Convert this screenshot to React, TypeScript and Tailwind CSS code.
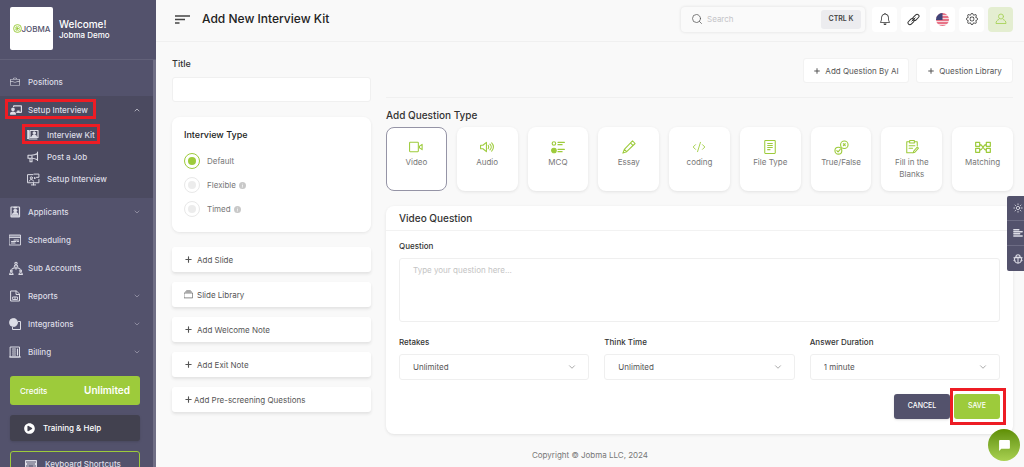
import React from 'react';
import { ChevronDown, ChevronUp, CodeXml, Plus, Search, Sun } from 'lucide-react';
import { FaChalkboardTeacher, FaKeyboard, FaPlayCircle } from 'react-icons/fa';
import { BsBell, BsBriefcase, BsGear, BsInfoCircleFill } from 'react-icons/bs';
import { MdChatBubble } from 'react-icons/md';

type IconProps = { className?: string; children?: React.ReactNode };

const Svg = ({ className = 'size-3', children }: IconProps) => (
  <svg
    xmlns="http://www.w3.org/2000/svg"
    viewBox="0 0 24 24"
    fill="none"
    stroke="currentColor"
    strokeWidth="1.8"
    strokeLinecap="round"
    strokeLinejoin="round"
    className={className}
    aria-hidden="true"
  >
    {children}
  </svg>
);

/* Sidebar icons */
const KitIcon = () => (
  <Svg>
    <path d="M1 3h3v16H1z" fill="currentColor" />
    <path d="M6 3h16v14H6z" strokeWidth="2.4" />
    <circle cx="14.5" cy="8" r="2.5" fill="currentColor" />
    <path d="M9.5 16c0-6 10-6 10 0z" fill="currentColor" />
    <path d="M4 20h16" strokeWidth="2" />
  </Svg>
);

const MegaphoneIcon = () => (
  <Svg>
    <path d="M21 2v17M21 5c-4 2.5-8 3.5-13 3.5H2v6h6c5 0 9 1 13 3M6 14.5v7h4v-6M10 8.5v6" strokeWidth="2.2" />
  </Svg>
);

const ScreenIcon = () => (
  <Svg className="size-[13px]">
    <path d="M11 3H1v15h21v-6M8 22h8M12 18v4M4 15c1-4 7-4 8 0" />
    <circle cx="8" cy="9" r="2" />
    <path d="M13 2h9v6h-5l-3 3V8" />
  </Svg>
);

const BadgeIcon = () => (
  <Svg>
    <rect x="4" y="2" width="17" height="20" rx="1" strokeWidth="2.4" />
    <circle cx="12.5" cy="9" r="3" fill="currentColor" />
    <path d="M7 17c0-6 11-6 11 0z" fill="currentColor" />
    <path d="M10 3h5M5 20h15" strokeWidth="3" />
  </Svg>
);

const ScheduleIcon = () => (
  <Svg>
    <path d="M1 2h22v20H1zM1 4h22M1 7h22" />
    <path d="M10 12h9M5 15h9M17 15h2M5 18h7" strokeWidth="2.2" />
  </Svg>
);

const AccountsIcon = () => (
  <Svg className="size-[14px]">
    <circle cx="12" cy="4" r="2" />
    <path d="M9 10c0-4 6-4 6 0M12 10v4M5 14l3-2h8l3 2" />
    <circle cx="4" cy="17" r="1.5" />
    <circle cx="20" cy="17" r="1.5" />
    <path d="M1 23c0-4 6-4 6 0zM17 23c0-4 6-4 6 0z" />
  </Svg>
);

const ReportIcon = () => (
  <Svg>
    <path d="M4 2h11l6 6v14H4zM14 2v7h7" strokeWidth="2" />
    <path d="M8 14h9v5H8zM12 14v5" />
  </Svg>
);

const IntegrationIcon = () => (
  <Svg>
    <circle cx="9" cy="9" r="8" fill="currentColor" />
    <path d="M19 7h4v16H7v-4" strokeWidth="2" />
  </Svg>
);

const BillingIcon = () => (
  <Svg>
    <path d="M3 2h18v20H3zM1 22h22" strokeWidth="2" />
    <path d="M7 6h6M7 10h6M7 14h6M7 18h6M17 6v12" strokeWidth="2.4" />
  </Svg>
);

/* Question type icons */
const VideoIcon = () => (
  <Svg className="size-[14px]">
    <rect x="1" y="4" width="15" height="16" rx="1" />
    <path d="M18 10.5l4.5-3v9l-4.500-3z" />
  </Svg>
);

const AudioIcon = () => (
  <Svg className="size-[14px]">
    <path d="M1 9h4l6-5v16l-6-5H1zM14 9c1.5 2 1.5 4 0 6M17 7c3 3 3 7 0 10M20 5c4 4 4 10 0 14" />
  </Svg>
);

const McqIcon = () => (
  <Svg className="size-[14px]">
    <circle cx="5" cy="6" r="3" strokeWidth="2" />
    <circle cx="5" cy="18" r="4" fill="currentColor" />
    <path d="M12 4h11M12 8h7M12 16h11M12 20h7" strokeWidth="2" />
  </Svg>
);

const EssayIcon = () => (
  <Svg className="size-[14px]">
    <path d="M18 1.5l4.5 4.5L8 20l-6.5 2.5L4 16zM14.5 5l4.5 4.5M4 16l4 4" />
  </Svg>
);

const FileIcon = () => (
  <Svg className="size-[14px]">
    <rect x="3" y="1" width="18" height="22" rx="1" />
    <path d="M8 6h8M8 9.500h8M8 13h8M8 16.500h4" />
  </Svg>
);

const TrueFalseIcon = () => (
  <Svg className="size-[15px]">
    <circle cx="16.5" cy="7.5" r="6" />
    <circle cx="7" cy="17" r="5.500" />
    <path d="M15 6l3 3M18 6l-3 3M4.500 17l2 2 3.500-4" />
  </Svg>
);

const BlanksIcon = () => (
  <Svg className="size-[14px]">
    <path d="M8 3H3v19h10M16 3h5v7M8 1h8v4H8zM7 10h10M7 14h6" />
    <path d="M21 12l2 2-6 7-3 1 1-3z" />
  </Svg>
);

const MatchingIcon = () => (
  <Svg className="size-4">
    <path d="M1 5h6v6H1zM1 14h6v6H1zM17 5h6v6h-6zM17 14h6v6h-6zM7 8c5 0 5 9 10 9M7 17c5 0 5-9 10-9" />
  </Svg>
);

/* Header icons */
const LinkIcon = () => (
  <Svg className="size-[13px]">
    <rect x="10" y="4.5" width="13" height="7" rx="3.5" transform="rotate(-45 16.5 8)" />
    <rect x="1" y="12.5" width="13" height="7" rx="3.5" transform="rotate(-45 7.5 16)" />
    <path d="M9 15l6-6" />
  </Svg>
);

const FlagIcon = () => (
  <svg viewBox="0 0 26 26" className="size-[13px] rounded-full" aria-hidden="true">
    <rect width="26" height="26" fill="#f4d9de" />
    <path d="M0 2h26M0 8h26M0 14h26M0 20h26M0 26h26" stroke="#e4506a" strokeWidth="3" />
    <rect width="13" height="14" fill="#3f4478" />
  </svg>
);

const ProfileIcon = () => (
  <Svg className="size-3">
    <circle cx="12" cy="7" r="5" />
    <path d="M7.5 13C4 14 2 17 2 21h20c0-4-2-7-5.5-8" />
  </Svg>
);

const SlideIcon = () => (
  <Svg className="size-[9px]">
    <path d="M1 8h22v13H1zM4 5h16M7 2h10" />
  </Svg>
);

const subItems = [
  { label: 'Interview Kit', icon: <KitIcon />, marked: true },
  { label: 'Post a Job', icon: <MegaphoneIcon /> },
  { label: 'Setup Interview', icon: <ScreenIcon /> },
];

const navItems = [
  { label: 'Applicants', icon: <BadgeIcon />, more: true },
  { label: 'Scheduling', icon: <ScheduleIcon /> },
  { label: 'Sub Accounts', icon: <AccountsIcon /> },
  { label: 'Reports', icon: <ReportIcon />, more: true },
  { label: 'Integrations', icon: <IntegrationIcon />, more: true },
  { label: 'Billing', icon: <BillingIcon />, more: true },
];

const questionTypes = [
  { label: 'Video', icon: <VideoIcon /> },
  { label: 'Audio', icon: <AudioIcon /> },
  { label: 'MCQ', icon: <McqIcon /> },
  { label: 'Essay', icon: <EssayIcon /> },
  { label: 'coding', icon: <CodeXml className="size-[14px]" strokeWidth={1.5} /> },
  { label: 'File Type', icon: <FileIcon /> },
  { label: 'True/False', icon: <TrueFalseIcon /> },
  { label: 'Fill in the Blanks', icon: <BlanksIcon /> },
  { label: 'Matching', icon: <MatchingIcon /> },
];

const plus = <Plus className="size-[9px]" strokeWidth={3} />;

const slideActions = [
  { label: 'Add Slide', icon: plus },
  { label: 'Slide Library', icon: <SlideIcon /> },
  { label: 'Add Welcome Note', icon: plus },
  { label: 'Add Exit Note', icon: plus },
  { label: 'Add Pre-screening Questions', icon: plus, tight: true },
];

const selects = [
  { id: 'retakes', label: 'Retakes', value: 'Unlimited' },
  { id: 'think-time', label: 'Think Time', value: 'Unlimited' },
  { id: 'duration', label: 'Answer Duration', value: '1 minute' },
];

const Sidebar = () => (
  <aside className="sticky top-0 flex h-screen w-[156px] shrink-0 flex-col overflow-hidden bg-[#53526c] text-[#dddde6]">
    <div className="flex h-[60px] shrink-0 items-center gap-1.5 border-b border-[#626179] pb-0.5 pl-2.5">
      <div className="flex size-[43px] items-center justify-center rounded-xs bg-white text-[8px] font-medium text-[#53526c]">
        <svg viewBox="0 0 24 24" className="size-[9px] text-[#9acb3b]" fill="none" stroke="currentColor" strokeWidth="2.5">
          <circle cx="12" cy="12" r="10.5" />
          <circle cx="12" cy="12" r="6" strokeWidth="1.5" />
          <path d="M10 9l5 3-5 3z" fill="currentColor" />
        </svg>
        JOBMA
      </div>
      <div className="font-medium text-white">
        <p className="text-[10px] leading-3">Welcome!</p>
        <p className="text-[8px] leading-[10px]">Jobma Demo</p>
      </div>
    </div>

    <div className="min-h-0 flex-1 border-r-3 border-[#706f86]">
      <nav className="pt-2 text-[8px] font-medium">
        <a href="#positions" className="flex h-7 items-center pl-2">
          <span className="flex w-5 items-center pl-0.5"><BsBriefcase className="size-2.5" /></span>
          Positions
        </a>
        <div className="bg-[#4b4a60] pb-2">
          <a href="#setup" className="relative flex h-7 items-center pr-3 pl-2">
            <span className="flex w-5 items-center pl-0.5"><FaChalkboardTeacher className="size-3" /></span>
            <span className="flex-1">Setup Interview</span>
            <ChevronUp className="size-2" strokeWidth={2} />
            <span className="absolute top-[3px] left-[5px] h-5 w-[91px] border-3 border-[#ed1c24]" />
          </a>
          {subItems.map((item) => (
            <a key={item.label} href="#kit" className="relative flex h-[22px] items-center pl-[27px]">
              <span className="w-5">{item.icon}</span>
              {item.label}
              {item.marked && <span className="absolute top-0 left-[22px] h-5 w-[78px] border-3 border-[#ed1c24]" />}
            </a>
          ))}
        </div>
        {navItems.map((item) => (
          <a key={item.label} href="#section" className="flex h-7 items-center pr-3 pl-2">
            <span className="w-5 pl-px">{item.icon}</span>
            <span className="flex-1">{item.label}</span>
            {item.more && <ChevronDown className="size-2 text-[#a9a8b8]" strokeWidth={2} />}
          </a>
        ))}
      </nav>

      <div className="mt-2.5 mr-[13px] ml-2.5 space-y-2.5 font-medium">
        <div className="flex h-[29px] items-center justify-between rounded-[3px] bg-[#9dcb3b] px-2.5 text-white">
          <span className="text-[8px]">Credits</span>
          <span className="text-[10px] font-semibold">Unlimited</span>
        </div>
        <button type="button" className="flex h-[26px] w-full items-center gap-2 rounded-[3px] bg-[#42414f] px-3.5 text-[8px] text-white shadow-sm">
          <FaPlayCircle className="size-[11px]" />
          Training &amp; Help
        </button>
        <button type="button" className="flex h-[26px] w-full items-center gap-2 rounded-[3px] border border-[#9dcb3b] px-3.5 text-[8px]">
          <FaKeyboard className="size-3" />
          Keyboard Shortcuts
        </button>
      </div>
    </div>
  </aside>
);

const Header = () => (
  <header className="flex h-[42px] items-center border-b border-[#f0f0f0] pr-[11px] pb-[3px] pl-[19px]">
    <button type="button" aria-label="Toggle menu" className="mr-3">
      <svg viewBox="0 0 15 9" className="h-[9px] w-[15px]" stroke="#444" strokeWidth="1.4" aria-hidden="true">
        <path d="M0 1h15M0 4.5h10M0 8h4.5" />
      </svg>
    </button>
    <h1 className="flex-1 text-[12px] font-medium text-[#222]">Add New Interview Kit</h1>
    <div className="flex h-[25px] w-[184px] items-center rounded-sm bg-[#fafafa] pr-1 pl-2.5 shadow-[0_0_3px_#dcdcdc]">
      <Search className="size-3 text-[#555]" strokeWidth={1.5} />
      <input
        type="text"
        aria-label="Search"
        placeholder="Search"
        className="min-w-0 flex-1 pl-1 text-[8px] outline-none placeholder:text-[#c4c4c8]"
      />
      <kbd className="flex h-[19px] w-10 items-center justify-center rounded-[3px] bg-[#ececef] font-[Inter,sans-serif] text-[7px] font-semibold text-[#444]">
        CTRL K
      </kbd>
    </div>
    <div className="ml-[7px] flex gap-1 text-[#333]">
      <button type="button" aria-label="Notifications" className="grid size-[25px] place-items-center rounded-sm bg-white">
        <BsBell className="size-3" />
      </button>
      <button type="button" aria-label="Copy link" className="grid size-[25px] place-items-center rounded-sm bg-white">
        <LinkIcon />
      </button>
      <button type="button" aria-label="Language" className="grid size-[25px] place-items-center rounded-sm bg-white">
        <FlagIcon />
      </button>
      <button type="button" aria-label="Settings" className="grid size-[25px] place-items-center rounded-sm bg-white">
        <BsGear className="size-3" />
      </button>
      <button type="button" aria-label="Profile" className="grid size-[25px] place-items-center rounded-sm bg-[#e4eed1] text-[#a8d35a]">
        <ProfileIcon />
      </button>
    </div>
  </header>
);

const LeftColumn = () => (
  <div className="w-[199px] shrink-0">
    <label htmlFor="title" className="block text-[9px] leading-3 font-medium text-[#333]">Title</label>
    <input
      id="title"
      type="text"
      className="mt-[7px] block h-[25px] w-full rounded-[3px] border border-[#f0f0f0] bg-white px-3 text-[8px] outline-none"
    />

    <fieldset className="mt-[15px] h-[115px] rounded-lg bg-white px-3 pt-3 shadow-[0_1px_3px_#e4e4e4]">
      <p className="text-[9px] leading-3 font-medium text-[#222]">Interview Type</p>
      <div className="mt-2 text-[8px] text-[#777]">
        {['Default', 'Flexible', 'Timed'].map((type, index) => (
          <label key={type} className="flex h-6 items-center">
            <input
              type="radio"
              name="interview-type"
              defaultChecked={index === 0}
              className="mr-[7px] size-4 appearance-none rounded-full border border-[#e8e8e8] bg-[#ececec] bg-clip-content p-[3px] checked:border-[#9dcb3b] checked:bg-[#9dcb3b]"
            />
            {type}
            {index > 0 && <BsInfoCircleFill className="ml-[3px] size-[7px] text-[#c8c8c8]" />}
          </label>
        ))}
      </div>
    </fieldset>

    <div className="mt-[15px] space-y-2.5">
      {slideActions.map((action) => (
        <button
          key={action.label}
          type="button"
          className={`flex h-[25px] w-full items-center rounded-[3px] bg-white px-3 text-[8px] text-[#555] shadow-[0_2px_3px_#e2e2e2] ${
            action.tight ? 'gap-px' : 'gap-1'
          }`}
        >
          {action.icon}
          {action.label}
        </button>
      ))}
    </div>
  </div>
);

const QuestionPanel = () => (
  <section className="mt-[15px] rounded-lg bg-white pb-[15px] shadow-[0_1px_3px_#e2e2e2]">
    <h2 className="border-b border-[#f2f2f2] px-[13px] py-1.5 text-[10px] leading-3 font-medium text-[#333]">
      Video Question
    </h2>
    <div className="px-[13px] pt-[9px]">
      <label htmlFor="question" className="block text-[8px] leading-3 font-medium text-[#333]">Question</label>
      <textarea
        id="question"
        placeholder="Type your question here..."
        className="mt-1.5 block h-16 w-full resize-none rounded-[3px] border border-[#efefef] px-[13px] py-[5px] text-[8px] leading-3 outline-none placeholder:text-[#c4c4c4]"
      />
      <div className="mt-3.5 grid grid-cols-3 gap-[15px]">
        {selects.map((field) => (
          <div key={field.id}>
            <label htmlFor={field.id} className="block text-[8px] leading-3 font-medium text-[#333]">{field.label}</label>
            <div className="relative mt-1.5">
              <select
                id={field.id}
                className="block h-[26px] w-full appearance-none rounded-[3px] border border-[#efefef] bg-white px-[13px] text-[8px] text-[#555] outline-none"
              >
                <option>{field.value}</option>
              </select>
              <ChevronDown className="pointer-events-none absolute top-2 right-3 size-2.5 text-[#777]" strokeWidth={1.5} />
            </div>
          </div>
        ))}
      </div>
      <div className="mt-3.5 flex justify-end gap-1 text-[7px] font-medium text-white">
        <button type="button" className="h-[25px] w-14 rounded-[3px] bg-[#53526c] shadow-sm">CANCEL</button>
        <button type="button" className="relative h-[25px] w-[46px] rounded-[3px] bg-[#9dcb3b]">
          SAVE
          <span className="absolute -inset-y-1.5 -right-1.5 -left-1 border-3 border-[#ed1c24]" />
        </button>
      </div>
    </div>
  </section>
);

const App = () => {
  return (
    <div className="flex min-h-screen bg-[#f9f9f9] font-[Inter,sans-serif]">
      <Sidebar />
      <div className="min-w-0 flex-1">
        <Header />
        <main className="flex gap-[15px] pt-4 pr-[11px] pl-4">
          <LeftColumn />
          <div className="min-w-0 flex-1">
            <div className="flex justify-end gap-[7px] border-b border-[#f0f0f0] pb-3.5 text-[8px] text-[#555]">
              <button type="button" className="flex h-[25px] w-[106px] items-center justify-center gap-1 rounded-[3px] border border-[#f2f2f2] bg-white">
                <Plus className="size-2" strokeWidth={3} />
                Add Question By AI
              </button>
              <button type="button" className="flex h-[25px] w-[97px] items-center justify-center gap-1 rounded-[3px] border border-[#f2f2f2] bg-white">
                <Plus className="size-2" strokeWidth={3} />
                Question Library
              </button>
            </div>

            <h2 className="mt-[11px] text-[10px] leading-3 font-medium text-[#333]">Add Question Type</h2>
            <div className="mt-1.5 grid grid-cols-9 gap-2.5">
              {questionTypes.map((type, index) => (
                <button
                  key={type.label}
                  type="button"
                  className={`flex h-16 flex-col items-center rounded-lg bg-white px-1 pt-3 text-[8px] leading-3 text-[#777] ${
                    index === 0 ? 'border border-[#9594a6]' : 'border border-transparent shadow-[0_1px_3px_#e2e2e2]'
                  }`}
                >
                  <span className="mb-0.5 flex h-[14px] items-center text-[#9dcb3b]">{type.icon}</span>
                  {type.label}
                </button>
              ))}
            </div>

            <QuestionPanel />
          </div>
        </main>
        <footer className="py-[15px] text-center text-[8px] leading-3 text-[#777]">Copyright © Jobma LLC, 2024</footer>
      </div>

      {/* Floating tools */}
      <div className="fixed top-[196px] right-0 w-[17px] divide-y divide-[#6d6c84] overflow-hidden rounded-l-xs bg-[#53526c] text-[#dddde6]">
        <button type="button" aria-label="Theme" className="grid h-[25px] w-full place-items-center pl-1">
          <Sun className="size-2.5" />
        </button>
        <button type="button" aria-label="Layout" className="grid h-[25px] w-full place-items-center pl-1">
          <Svg className="size-2.5">
            <path d="M2 4h12M2 9h20M2 14h14M2 19h20" strokeWidth="3.5" />
          </Svg>
        </button>
        <button type="button" aria-label="Report a bug" className="grid h-[25px] w-full place-items-center pl-1">
          <Svg className="size-2.5">
            <path d="M7 7c0-7 10-7 10 0M2 9h20M5 8c-4 7 0 14 7 14s11-7 7-14zM12 9v13M2 15h3M19 15h3" strokeWidth="2.5" />
          </Svg>
        </button>
      </div>
      <button
        type="button"
        aria-label="Open chat"
        className="fixed right-1 bottom-1.5 grid size-8 place-items-center rounded-full bg-linear-to-b from-[#5f8f00] to-[#a9d150] text-white"
      >
        <MdChatBubble className="size-[13px]" />
      </button>
    </div>
  );
};

export default App;
